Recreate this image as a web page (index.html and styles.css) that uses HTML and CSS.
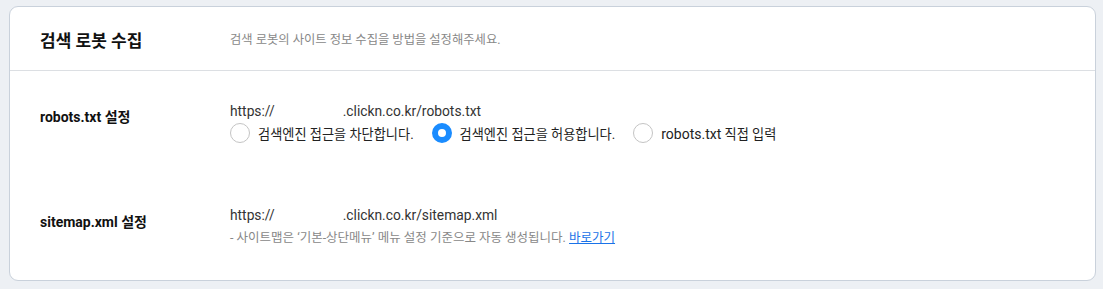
FILE: index.html
```html
<!DOCTYPE html>
<html lang="ko">
<head>
    <meta charset="UTF-8">
    <meta name="viewport" content="width=device-width, initial-scale=1.0">
    <title>검색 로봇 수집</title>
    <link rel="stylesheet" href="styles.css">
</head>
<body>
    <div class="card">
        <div class="card-header">
            <h2>검색 로봇 수집</h2>
            <p>검색 로봇의 사이트 정보 수집을 방법을 설정해주세요.</p>
        </div>

        <!-- robots.txt -->
        <div class="setting-row first">
            <div class="setting-label">robots.txt 설정</div>
            <div class="setting-body">
                <div class="url">https://<span class="masked"></span>.clickn.co.kr/robots.txt</div>
                <div class="radio-group">
                    <label class="radio"><input type="radio" name="robots"><span class="dot"></span><span>검색엔진 접근을 차단합니다.</span></label>
                    <label class="radio"><input type="radio" name="robots" checked><span class="dot"></span><span>검색엔진 접근을 허용합니다.</span></label>
                    <label class="radio"><input type="radio" name="robots"><span class="dot"></span><span><span class="en">robots.txt</span> 직접 입력</span></label>
                </div>
            </div>
        </div>

        <!-- sitemap.xml -->
        <div class="setting-row second">
            <div class="setting-label">sitemap.xml 설정</div>
            <div class="setting-body">
                <div class="url">https://<span class="masked"></span>.clickn.co.kr/sitemap.xml</div>
                <div class="note">- 사이트맵은 ‘기본-상단메뉴’ 메뉴 설정 기준으로 자동 생성됩니다. <a href="#">바로가기</a></div>
            </div>
        </div>
    </div>
</body>
</html>
```

FILE: styles.css
```css
body {
    margin: 0;
    padding: 6px 7px 8px 9px;
    background-color: #edf0f4;
    font-family: Roboto, "Noto Sans CJK KR", sans-serif;
    color: #222;
}
.card {
    background-color: #fff;
    border: 1px solid #c9d1db;
    border-radius: 9px;
}
.card-header {
    display: flex;
    align-items: center;
    height: 63px;
    padding-left: 30px;
    border-bottom: 1px solid #dcdfe3;
}
.card-header h2 {
    width: 190px;
    margin: 0;
    font-size: 17px;
    font-weight: bold;
    color: #111;
    padding-top: 2px;
}
.card-header p {
    margin: 0;
    font-size: 12.3px;
    color: #888;
}
.setting-row {
    display: grid;
    grid-template-columns: 190px 1fr;
    padding-left: 30px;
}
.setting-row.first {
    padding-top: 30px;
}
.setting-row.second {
    padding-top: 60px;
    padding-bottom: 32px;
}
.setting-label {
    font-size: 14px;
    font-weight: bold;
    line-height: 20px;
    color: #111;
    padding-top: 6px;
}
.second .setting-label {
    padding-top: 7px;
}
.url {
    font-size: 13.8px;
    line-height: 20px;
    color: #333;
}
.masked {
    display: inline-block;
    width: 68px;
}
.radio-group {
    display: flex;
    gap: 18px;
    height: 24px;
    align-items: center;
}
.radio {
    display: flex;
    align-items: center;
    gap: 8px;
    font-size: 13.2px;
    color: #222;
}
.radio .en {
    font-size: 14px;
}
.radio input {
    display: none;
}
.dot {
    width: 20px;
    height: 20px;
    border: 1px solid #c4c4c4;
    border-radius: 50%;
    box-sizing: border-box;
}
.radio input:checked + .dot {
    border: 6px solid #1a8cff;
    background-color: #fff;
}
.note {
    margin-top: 3px;
    font-size: 12.5px;
    line-height: 20px;
    color: #888;
}
.note a {
    color: #1a73e8;
}
```
